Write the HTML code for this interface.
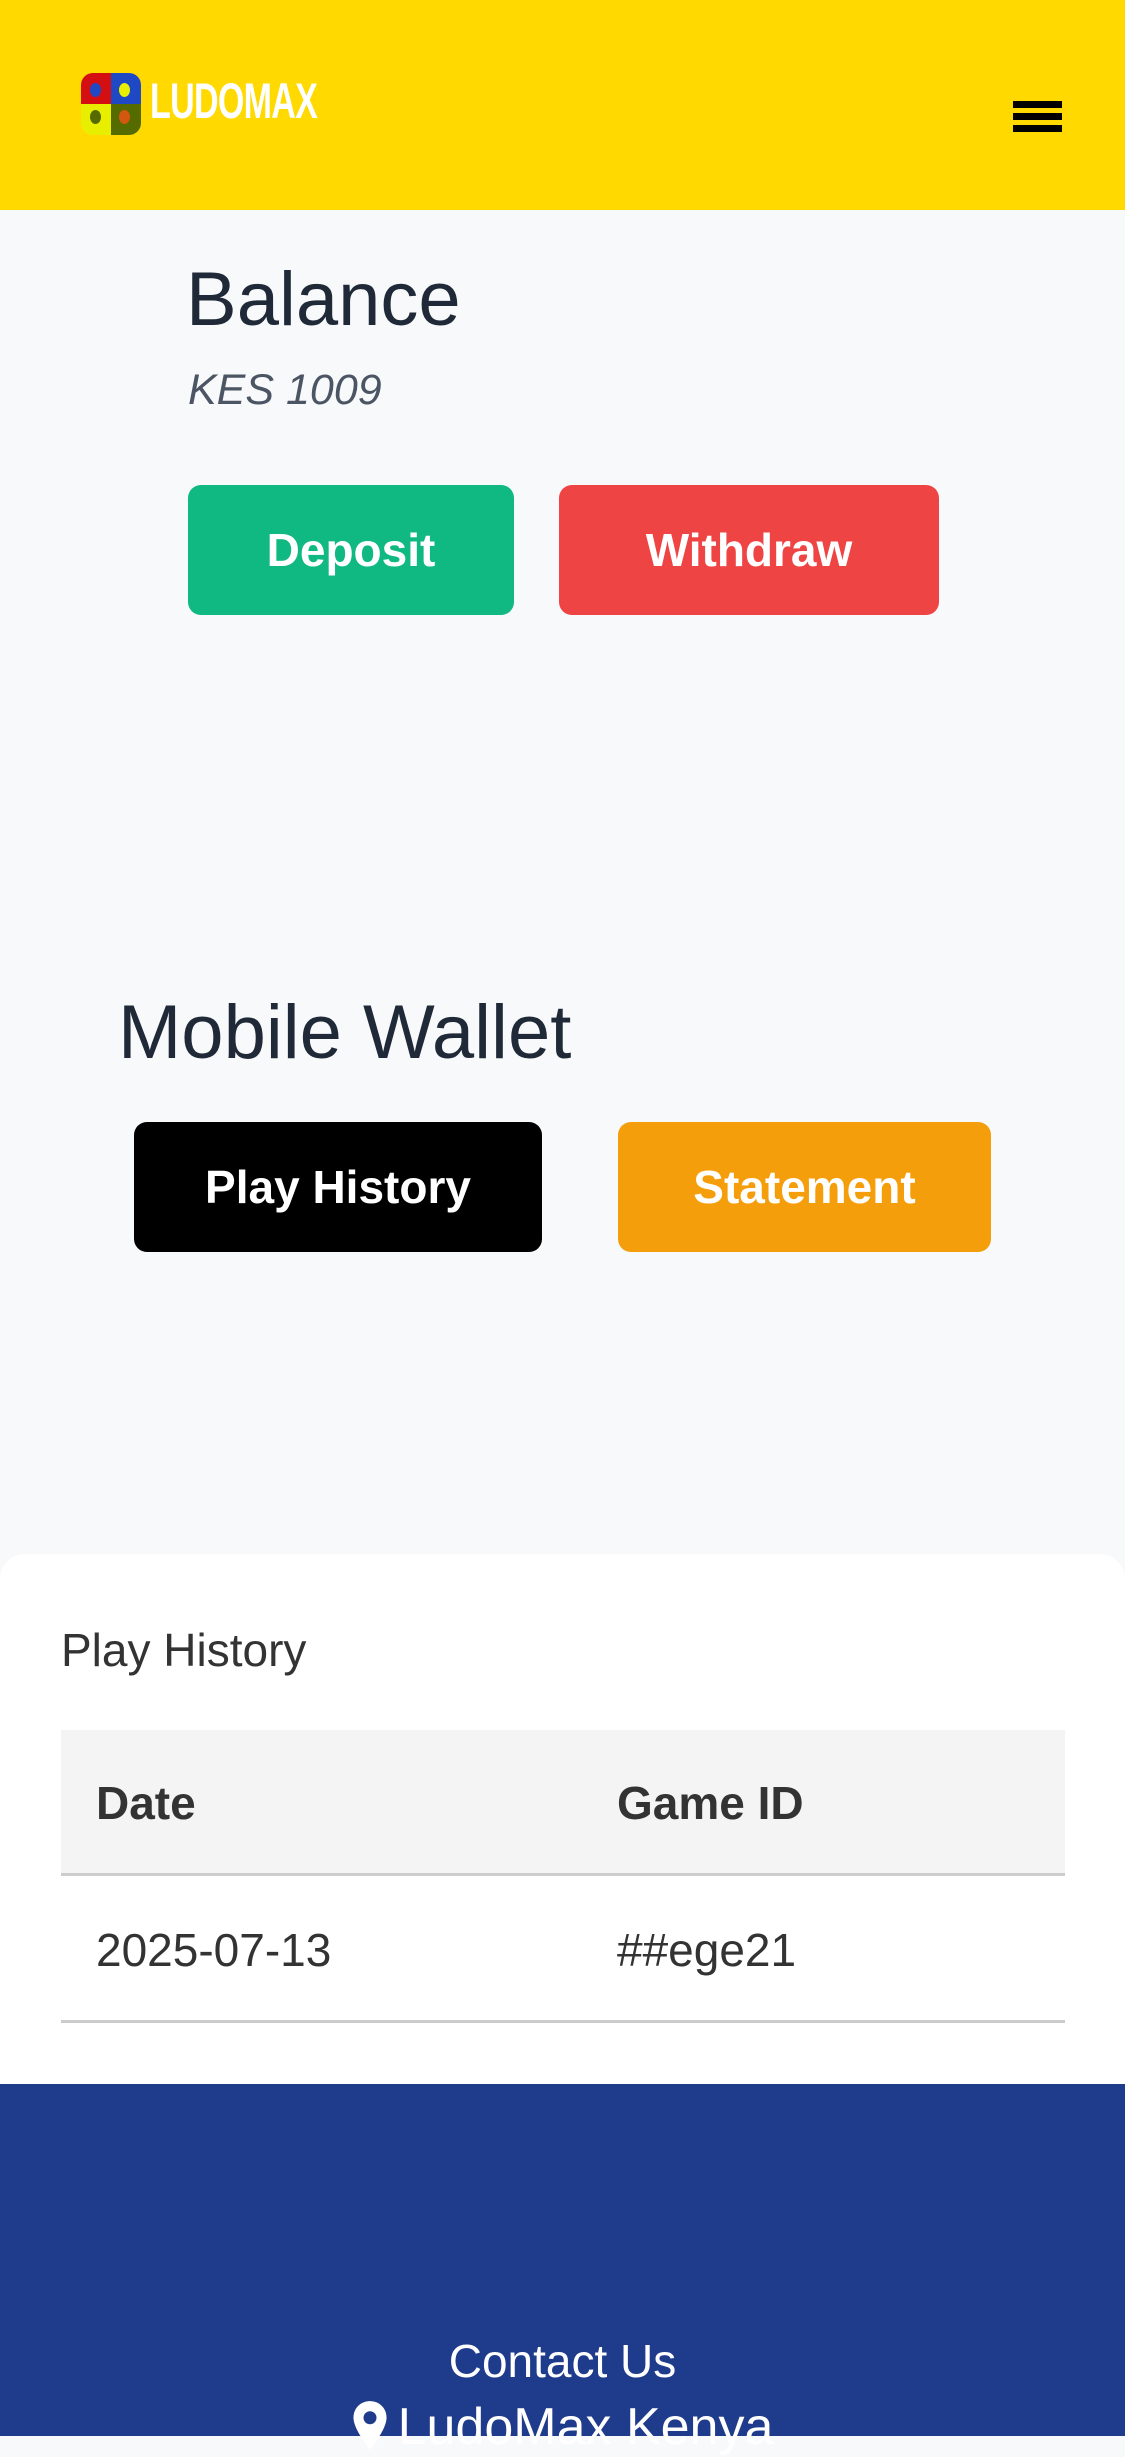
<!DOCTYPE html>
<html><head><meta charset="utf-8"><style>
*{margin:0;padding:0;box-sizing:border-box}
body{width:1125px;height:2436px;overflow:hidden;background:#f8f9fa;font-family:"Liberation Sans","DejaVu Sans",sans-serif;position:relative}
.a{position:absolute}
.hdr{left:0;top:0;width:1125px;height:210px;background:#ffd900}
.btn{position:absolute;display:flex;align-items:center;justify-content:center;color:#fff;font-weight:bold;font-size:46px;border-radius:13px}
.t{font-size:46px;color:#333;line-height:50px}
</style></head><body>
<div class="a hdr">
  <div class="a" style="left:81px;top:73px;width:60px;height:62px;border-radius:12px;overflow:hidden">
    <div class="a" style="left:0;top:0;width:30px;height:31px;background:#d40f12"></div>
    <div class="a" style="left:30px;top:0;width:30px;height:31px;background:#1f48c4"></div>
    <div class="a" style="left:0;top:31px;width:30px;height:31px;background:#e8ee00"></div>
    <div class="a" style="left:30px;top:31px;width:30px;height:31px;background:#556b00"></div>
    <div class="a" style="left:9px;top:10px;width:11px;height:14px;border-radius:50%;background:#1f48c4"></div>
    <div class="a" style="left:38px;top:10px;width:11px;height:14px;border-radius:50%;background:#e8ee00"></div>
    <div class="a" style="left:9px;top:37px;width:11px;height:14px;border-radius:50%;background:#556b00"></div>
    <div class="a" style="left:38px;top:37px;width:11px;height:14px;border-radius:50%;background:#d4570f"></div>
  </div>
  <div class="a" style="left:150px;top:76px;color:#fff;font-weight:bold;font-size:50px;letter-spacing:-1px;transform:scaleX(0.68);transform-origin:left top;line-height:50px">LUDOMAX</div>
  <div class="a" style="left:1013px;top:101px;width:49px;height:7px;background:#000"></div>
  <div class="a" style="left:1013px;top:113px;width:49px;height:7px;background:#000"></div>
  <div class="a" style="left:1013px;top:125px;width:49px;height:7px;background:#000"></div>
</div>
<div class="a" style="left:186px;top:260px;font-size:76px;color:#1f2937;line-height:80px">Balance</div>
<div class="a" style="left:188px;top:365px;font-size:43px;font-style:italic;color:#4b5563;line-height:50px">KES 1009</div>
<div class="btn" style="left:188px;top:485px;width:326px;height:130px;background:#10b981">Deposit</div>
<div class="btn" style="left:559px;top:485px;width:380px;height:130px;background:#ef4444">Withdraw</div>
<div class="a" style="left:118px;top:993px;font-size:76px;color:#1f2937;line-height:80px">Mobile Wallet</div>
<div class="btn" style="left:134px;top:1122px;width:408px;height:130px;background:#000">Play History</div>
<div class="btn" style="left:618px;top:1122px;width:373px;height:130px;background:#f59e0b">Statement</div>
<div class="a" style="left:0;top:1554px;width:1125px;height:550px;background:#fff;border-radius:25px 25px 0 0"></div>
<div class="a t" style="left:61px;top:1625px">Play History</div>
<div class="a" style="left:61px;top:1730px;width:1004px;height:146px;background:#f4f4f4;border-bottom:3px solid #ccc"></div>
<div class="a" style="left:61px;top:1876px;width:1004px;height:147px;border-bottom:3px solid #ccc"></div>
<div class="a t" style="left:96px;top:1778px;font-weight:bold">Date</div>
<div class="a t" style="left:617px;top:1778px;font-weight:bold">Game ID</div>
<div class="a t" style="left:96px;top:1925px">2025-07-13</div>
<div class="a t" style="left:617px;top:1925px">##ege21</div>
<div class="a" style="left:0;top:2084px;width:1125px;height:352px;background:#1f3b8b"></div>
<div class="a" style="left:0;top:2336px;width:1125px;text-align:center;font-size:46px;color:#fff;line-height:50px">Contact Us</div>
<div class="a" style="left:0;top:2397px;width:1125px;text-align:center;font-size:52px;color:#fff;line-height:60px"><svg width="36" height="52" viewBox="0 0 30 44" style="vertical-align:-8px;margin-right:10px"><path d="M15 1C7 1 1 7 1 15c0 10 14 27 14 27s14-17 14-27C29 7 23 1 15 1z" fill="#fff"/><circle cx="15" cy="15" r="5.5" fill="#1f3b8b"/></svg>LudoMax Kenya</div>
</body></html>
